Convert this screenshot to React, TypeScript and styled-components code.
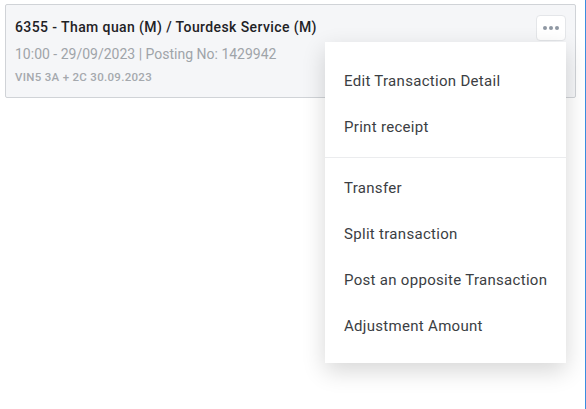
import React from "react";
import styled, { createGlobalStyle } from "styled-components";

const Global = createGlobalStyle`
  html, body { margin: 0; padding: 0; background: #fff; }
  body { font-family: Roboto, "Noto Sans", sans-serif; }
  * { box-sizing: border-box; }
`;

const Page = styled.div`
  width: 586px;
  height: 409px;
  padding: 4px 10px 0 5px;
  border-right: 1px solid #3a8ee0;
`;

const Card = styled.div`
  display: flex;
  align-items: flex-start;
  justify-content: space-between;
  width: 571px;
  padding: 12px 9px 11px 9px;
  background: #f5f6f8;
  border: 1px solid #d0d3d7;
  border-radius: 2px;
`;

const Info = styled.div`
  display: flex;
  flex-direction: column;
`;

const Title = styled.div`
  font-size: 14px;
  line-height: 20px;
  font-weight: 500;
  letter-spacing: 0.4px;
  color: #1e2226;
`;

const Meta = styled.div`
  margin-top: 7px;
  font-size: 14px;
  line-height: 20px;
  color: #9fa4a9;
`;

const Note = styled.div`
  margin-top: 5px;
  font-size: 11.5px;
  line-height: 17px;
  font-weight: 500;
  letter-spacing: 0.3px;
  color: #a5a9ae;
`;

const Actions = styled.div`
  position: relative;
  margin-top: -2px;
`;

const DotsButton = styled.button`
  display: flex;
  align-items: center;
  justify-content: center;
  gap: 2px;
  width: 30px;
  height: 26px;
  padding: 0;
  background: #fff;
  border: 1px solid #e4e6e9;
  border-radius: 4px;
`;

const Dot = styled.span`
  width: 4px;
  height: 4px;
  border-radius: 50%;
  background: #8f98a3;
`;

const Menu = styled.div`
  position: absolute;
  top: calc(100% + 1px);
  right: 0;
  width: 241px;
  background: #fff;
  box-shadow: 0 8px 22px rgba(0, 0, 0, 0.16);
  z-index: 10;
`;

const Section = styled.div<{ $top: number; $bottom: number }>`
  display: flex;
  flex-direction: column;
  padding: ${(p) => p.$top}px 0 ${(p) => p.$bottom}px;
  & + & { border-top: 1px solid #ebecee; }
`;

const Item = styled.div`
  height: 46px;
  display: flex;
  align-items: center;
  padding-left: 19px;
  font-size: 15px;
  letter-spacing: 0.3px;
  color: #3b3e43;
  white-space: nowrap;
`;

export default function App() {
  return (
    <>
      <Global />
      <Page>
        <Card>
          <Info>
            <Title>6355 - Tham quan (M) / Tourdesk Service (M)</Title>
            <Meta>10:00 - 29/09/2023 | Posting No: 1429942</Meta>
            <Note>VIN5 3A + 2C 30.09.2023</Note>
          </Info>
          <Actions>
            <DotsButton aria-label="More">
              <Dot />
              <Dot />
              <Dot />
            </DotsButton>
            <Menu>
              <Section $top={16} $bottom={7}>
                <Item>Edit Transaction Detail</Item>
                <Item>Print receipt</Item>
              </Section>
              <Section $top={7} $bottom={14}>
                <Item>Transfer</Item>
                <Item>Split transaction</Item>
                <Item>Post an opposite Transaction</Item>
                <Item>Adjustment Amount</Item>
              </Section>
            </Menu>
          </Actions>
        </Card>
      </Page>
    </>
  );
}
